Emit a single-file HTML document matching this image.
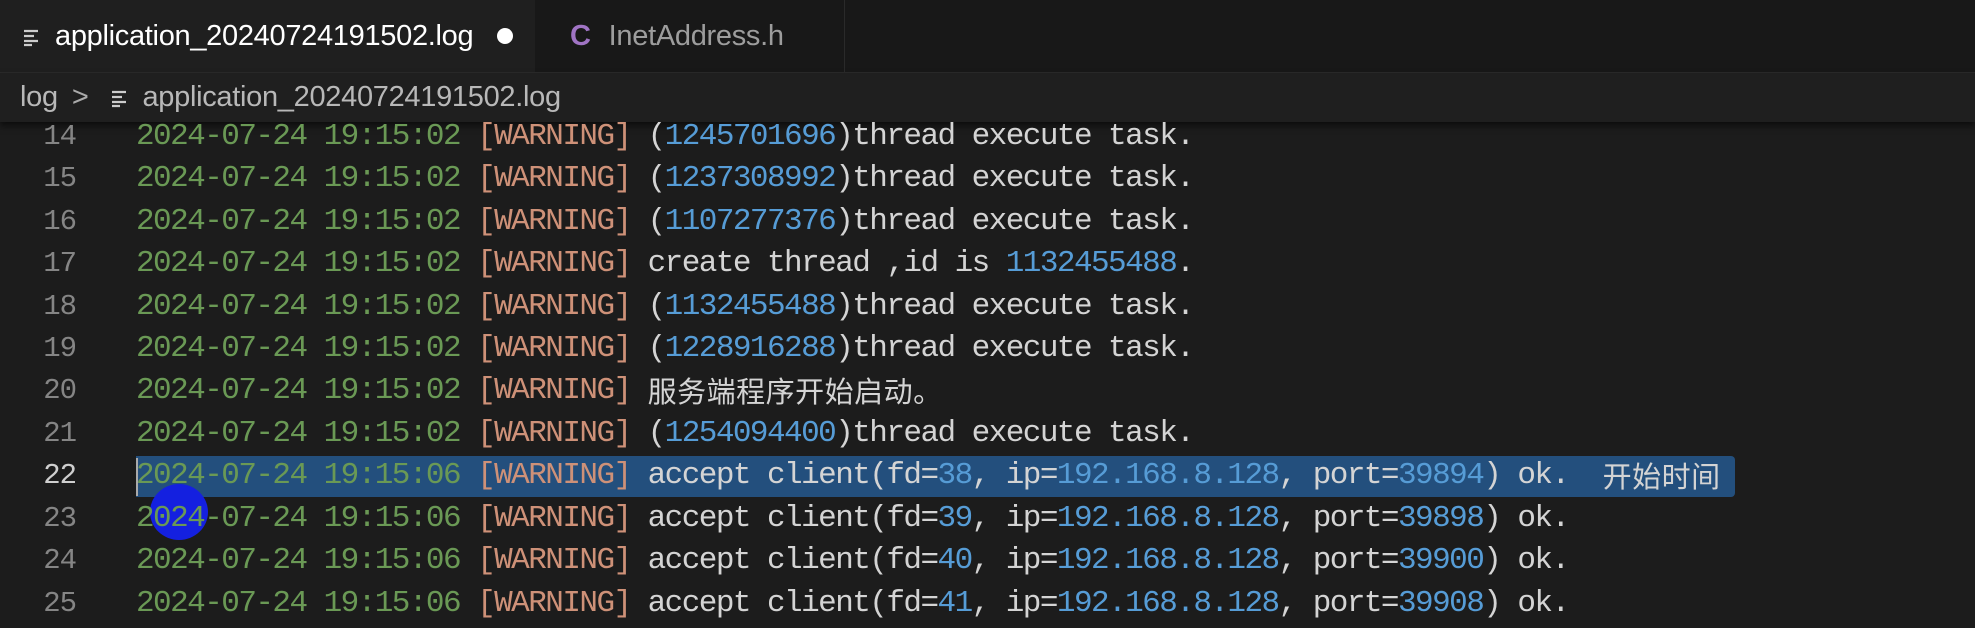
<!DOCTYPE html>
<html><head><meta charset="utf-8"><style>
body{margin:0;width:1975px;height:628px;background:#1c1c1c;overflow:hidden;position:relative;font-family:"Liberation Sans","Noto Sans CJK SC",sans-serif}
.tabs{position:absolute;left:0;top:0;width:1975px;height:72px;background:#181818;border-bottom:1px solid #2a2a2a}
.tab{position:absolute;top:0;height:72px;color:#fff;font-size:29px;line-height:72px;letter-spacing:-0.3px}
.t1{left:0;width:535px;background:#1f1f1f}
.t2{left:536px;width:308px;color:#9d9d9d;border-right:1px solid #2a2a2a}
.crumb{position:absolute;top:73px;left:0;width:1975px;height:49px;background:#1f1f1f;color:#b8b8b8;font-size:29px;line-height:48px;letter-spacing:-0.3px;box-shadow:0 4px 6px #0008}
.ico{display:inline-block;vertical-align:middle}
.line{position:absolute;left:0;height:42px;line-height:42px;font-family:"Liberation Mono","Noto Sans CJK SC",monospace;font-size:31px;letter-spacing:-1.55px;color:#d4d4d4;white-space:pre}
.ln{position:absolute;left:0;width:76px;text-align:right;color:#858585;font-size:29px;letter-spacing:-1px}
.tx{position:absolute;left:136px}
.d{color:#6a9955}.w{color:#ce9178}.n{color:#569cd6}
.cj{display:inline-block;vertical-align:top;height:42px;line-height:40px;font-family:"Noto Sans CJK SC",sans-serif;font-size:29px;letter-spacing:0.5px}
.sel{position:absolute;left:136px;top:456px;width:1599px;height:41px;background:#234f7d;border-radius:0 4px 4px 0}
</style></head><body>
<div class="tabs">
<div class="tab t1"><svg class="ico" width="20" height="20" style="margin:0 13px 0 22px"><path d="M2 4h14M2 9h10M2 14h14M2 18h8" stroke="#ccc" stroke-width="2.2"/></svg>application_20240724191502.log<span style="position:absolute;left:497px;top:28px;width:16px;height:16px;border-radius:50%;background:#fff"></span></div>
<div class="tab t2"><span style="color:#a074c4;font-weight:bold;margin:0 18px 0 34px">C</span>InetAddress.h</div>
</div>
<div class="crumb"><span style="margin-left:20px">log</span><span style="margin:0 22px 0 14px;color:#aaa">&gt;</span><svg class="ico" width="20" height="20" style="margin-right:12px"><path d="M2 4h14M2 9h10M2 14h14M2 18h8" stroke="#ccc" stroke-width="2.2"/></svg>application_20240724191502.log</div>
<div class="sel"></div>
<div style="position:absolute;left:136px;top:458px;width:2px;height:38px;background:#aaa"></div>
<div style="position:absolute;left:150px;top:484px;width:58px;height:56px;border-radius:50%;background:#1420e0"></div>

<div class="line" style="top:116px"><span class="ln">14</span><span class="tx"><span class="d">2024-07-24 19:15:02</span> <span class="w">[WARNING]</span> (<span class="n">1245701696</span>)thread execute task.</span></div>
<div class="line" style="top:158px"><span class="ln">15</span><span class="tx"><span class="d">2024-07-24 19:15:02</span> <span class="w">[WARNING]</span> (<span class="n">1237308992</span>)thread execute task.</span></div>
<div class="line" style="top:201px"><span class="ln">16</span><span class="tx"><span class="d">2024-07-24 19:15:02</span> <span class="w">[WARNING]</span> (<span class="n">1107277376</span>)thread execute task.</span></div>
<div class="line" style="top:243px"><span class="ln">17</span><span class="tx"><span class="d">2024-07-24 19:15:02</span> <span class="w">[WARNING]</span> create thread ,id is <span class="n">1132455488</span>.</span></div>
<div class="line" style="top:286px"><span class="ln">18</span><span class="tx"><span class="d">2024-07-24 19:15:02</span> <span class="w">[WARNING]</span> (<span class="n">1132455488</span>)thread execute task.</span></div>
<div class="line" style="top:328px"><span class="ln">19</span><span class="tx"><span class="d">2024-07-24 19:15:02</span> <span class="w">[WARNING]</span> (<span class="n">1228916288</span>)thread execute task.</span></div>
<div class="line" style="top:370px"><span class="ln">20</span><span class="tx"><span class="d">2024-07-24 19:15:02</span> <span class="w">[WARNING]</span> <span class="cj">服务端程序开始启动。</span></span></div>
<div class="line" style="top:413px"><span class="ln">21</span><span class="tx"><span class="d">2024-07-24 19:15:02</span> <span class="w">[WARNING]</span> (<span class="n">1254094400</span>)thread execute task.</span></div>
<div class="line" style="top:455px"><span class="ln" style="color:#cfcfcf">22</span><span class="tx"><span class="d">2024-07-24 19:15:06</span> <span class="w">[WARNING]</span> accept client(fd=<span class="n">38</span>, ip=<span class="n">192.168.8.128</span>, port=<span class="n">39894</span>) ok.  <span class="cj">开始时间</span></span></div>
<div class="line" style="top:498px"><span class="ln">23</span><span class="tx"><span class="d">2024-07-24 19:15:06</span> <span class="w">[WARNING]</span> accept client(fd=<span class="n">39</span>, ip=<span class="n">192.168.8.128</span>, port=<span class="n">39898</span>) ok.</span></div>
<div class="line" style="top:540px"><span class="ln">24</span><span class="tx"><span class="d">2024-07-24 19:15:06</span> <span class="w">[WARNING]</span> accept client(fd=<span class="n">40</span>, ip=<span class="n">192.168.8.128</span>, port=<span class="n">39900</span>) ok.</span></div>
<div class="line" style="top:583px"><span class="ln">25</span><span class="tx"><span class="d">2024-07-24 19:15:06</span> <span class="w">[WARNING]</span> accept client(fd=<span class="n">41</span>, ip=<span class="n">192.168.8.128</span>, port=<span class="n">39908</span>) ok.</span></div>
</body></html>
